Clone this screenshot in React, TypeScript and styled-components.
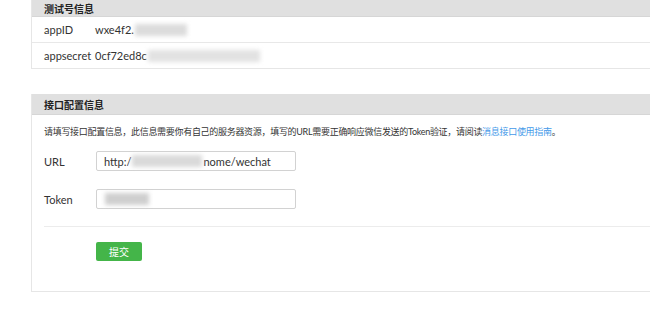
import React from 'react';
import styled, { createGlobalStyle } from 'styled-components';

const GlobalStyle = createGlobalStyle`
  html, body {
    margin: 0;
    padding: 0;
    background: #fff;
    overflow: hidden;
  }
  body {
    font-family: Lato, "Noto Sans CJK SC", "Liberation Sans", sans-serif;
    font-size: 11px;
    color: #222;
  }
`;

const Page = styled.div`
  width: 650px;
  height: 309px;
  padding-left: 31px;
  box-sizing: border-box;
  display: flex;
  flex-direction: column;
`;

const Panel = styled.div<{ $top?: number }>`
  width: 640px;
  margin-top: ${p => p.$top || 0}px;
  border: 1px solid #e6e6e6;
  border-top: none;
  border-right: none;
  box-sizing: border-box;
  background: #fff;
`;

const Header = styled.div<{ $h: number }>`
  height: ${p => p.$h}px;
  background: #e0e0e0;
  border-bottom: 1px solid #d6d6d6;
  padding-left: 12px;
  display: flex;
  align-items: center;
  font-weight: bold;
  font-size: 10px;
  color: #222;
  box-sizing: border-box;
`;

const InfoRow = styled.div<{ $last?: boolean }>`
  height: 25px;
  display: flex;
  align-items: center;
  padding-left: 12px;
  border-bottom: ${p => (p.$last ? 'none' : '1px solid #e8e8e8')};
  font-size: 11px;
  color: #333;
`;

const RowLabel = styled.span`
  width: 51px;
  flex-shrink: 0;
`;

const Blur = styled.span<{ $w: number; $shade?: string }>`
  display: inline-block;
  width: ${p => p.$w}px;
  height: 12px;
  background: ${p => p.$shade || '#d4d4d4'};
  filter: blur(2px);
  vertical-align: middle;
  margin: 0 1px;
`;

const Body = styled.div`
  padding-left: 12px;
`;

const Desc = styled.p`
  margin: 10px 0 0;
  font-size: 9px;
  letter-spacing: -0.3px;
  color: #333;
  line-height: 14px;
  white-space: nowrap;
`;

const Link = styled.a`
  color: #459ae9;
  text-decoration: none;
`;

const FormRow = styled.div<{ $top: number }>`
  display: flex;
  align-items: center;
  margin-top: ${p => p.$top}px;
`;

const FormLabel = styled.span`
  width: 52px;
  font-size: 11px;
  color: #333;
`;

const Field = styled.div`
  width: 200px;
  height: 20px;
  border: 1px solid #d2d2d2;
  border-radius: 2px;
  box-sizing: border-box;
  display: flex;
  align-items: center;
  padding-left: 7px;
  font-size: 11px;
  color: #333;
`;

const Divider = styled.div`
  margin-top: 17px;
  height: 1px;
  background: #ececec;
`;

const Actions = styled.div`
  padding: 15px 0 30px 52px;
`;

const Submit = styled.button`
  width: 46px;
  height: 19px;
  border: none;
  border-radius: 2px;
  background: #44b549;
  color: #fff;
  font-family: inherit;
  font-size: 10px;
  padding: 0;
  cursor: pointer;
`;

export default function App() {
  return (
    <>
      <GlobalStyle />
      <Page>
        <Panel>
          <Header $h={17}>测试号信息</Header>
          <InfoRow>
            <RowLabel>appID</RowLabel>
            <span>wxe4f2.</span>
            <Blur $w={52} $shade="#dcdcdc" />
          </InfoRow>
          <InfoRow $last>
            <RowLabel>appsecret</RowLabel>
            <span>0cf72ed8c</span>
            <Blur $w={112} $shade="#e2e2e2" />
          </InfoRow>
        </Panel>

        <Panel $top={25}>
          <Header $h={21}>接口配置信息</Header>
          <Body>
            <Desc>
              请填写接口配置信息，此信息需要你有自己的服务器资源，填写的URL需要正确响应微信发送的Token验证，请阅读
              <Link href="#">消息接口使用指南</Link>。
            </Desc>
            <FormRow $top={12}>
              <FormLabel>URL</FormLabel>
              <Field>
                http:/
                <Blur $w={70} $shade="#dadada" />
                nome/wechat
              </Field>
            </FormRow>
            <FormRow $top={18}>
              <FormLabel>Token</FormLabel>
              <Field>
                <Blur $w={44} $shade="#cfcfcf" />
              </Field>
            </FormRow>
            <Divider />
            <Actions>
              <Submit>提交</Submit>
            </Actions>
          </Body>
        </Panel>
      </Page>
    </>
  );
}
